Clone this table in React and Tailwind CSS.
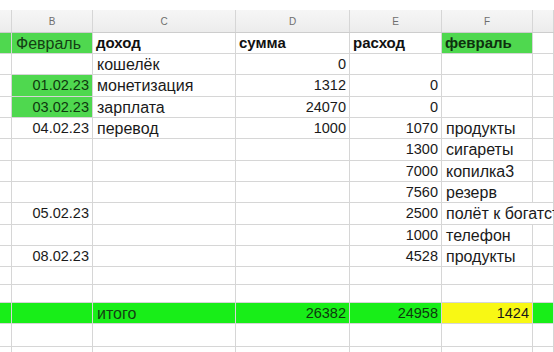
import React from 'react';

const widths = ['w-[12px]', 'w-[81px]', 'w-[143px]', 'w-[114px]', 'w-[92px]', 'w-[91px]', 'flex-1'];
const letters = ['', 'B', 'C', 'D', 'E', 'F', ''];

const GREEN = 'bg-[#4fd84f]';
const BRIGHT = 'bg-[#18ee18]';
const YELLOW = 'bg-[#f8f814]';

// each cell: [text, kind, bg]
// kind: 't' left text, 'b' bold left, 'n' right number, 'g' right green text number
const rows = [
  { h: 'h-[21px]', cells: [['', 't', GREEN], ['Февраль', 'tg', GREEN], ['доход', 'b'], ['сумма', 'b'], ['расход', 'b'], ['февраль', 'bg', GREEN], ['', 't']] },
  { h: 'h-[21px]', cells: [[''], [''], ['кошелёк', 't'], ['0', 'n'], [''], [''], ['']] },
  { h: 'h-[22px]', cells: [[''], ['01.02.23', 'g', GREEN], ['монетизация', 't'], ['1312', 'n'], ['0', 'n'], [''], ['']] },
  { h: 'h-[21px]', cells: [[''], ['03.02.23', 'g', GREEN], ['зарплата', 't'], ['24070', 'n'], ['0', 'n'], [''], ['']] },
  { h: 'h-[21px]', cells: [[''], ['04.02.23', 'n'], ['перевод', 't'], ['1000', 'n'], ['1070', 'n'], ['продукты', 't'], ['']] },
  { h: 'h-[22px]', cells: [[''], [''], [''], [''], ['1300', 'n'], ['сигареты', 't'], ['']] },
  { h: 'h-[21px]', cells: [[''], [''], [''], [''], ['7000', 'n'], ['копилка3', 't'], ['']] },
  { h: 'h-[21px]', cells: [[''], [''], [''], [''], ['7560', 'n'], ['резерв', 't'], ['']] },
  { h: 'h-[22px]', overflow: true, cells: [[''], ['05.02.23', 'n'], [''], [''], ['2500', 'n'], ['полёт к богатству', 't'], ['']] },
  { h: 'h-[21px]', cells: [[''], [''], [''], [''], ['1000', 'n'], ['телефон', 't'], ['']] },
  { h: 'h-[21px]', cells: [[''], ['08.02.23', 'n'], [''], [''], ['4528', 'n'], ['продукты', 't'], ['']] },
  { h: 'h-[18px]', cells: [[''], [''], [''], [''], [''], [''], ['']] },
  { h: 'h-[18px]', cells: [[''], [''], [''], [''], [''], [''], ['']] },
  { h: 'h-[21px]', cells: [['', 't', BRIGHT], ['', 't', BRIGHT], ['итого', 'tg', BRIGHT], ['26382', 'g', BRIGHT], ['24958', 'g', BRIGHT], ['1424', 'n', YELLOW], ['', 't', BRIGHT]] },
  { h: 'h-[23px]', cells: [[''], [''], [''], [''], [''], [''], ['']] },
  { h: 'h-[21px]', cells: [[''], [''], [''], [''], [''], [''], ['']] },
];

const kindClass = {
  t: 'justify-start pl-[4px] text-[16px] text-[#1a1a1a]',
  tg: 'justify-start pl-[4px] text-[16px] text-[#143f14]',
  b: 'justify-start pl-[3px] text-[15px] font-bold text-[#111]',
  bg: 'justify-start pl-[3px] text-[15px] font-bold text-[#0e300e]',
  n: 'justify-end pr-[3px] text-[14.5px] text-[#1a1a1a]',
  g: 'justify-end pr-[3px] text-[14.5px] text-[#0e380e]',
};

const Cell = ({ w, text, kind = 't', bg, noRight, overflow }) => (
  <div
    className={`${w} shrink-0 h-full flex items-center pt-[1px] whitespace-nowrap border-b border-[#d6d6d6] ${
      noRight ? '' : 'border-r'
    } ${bg || ''} ${kindClass[kind]} ${overflow ? 'overflow-visible relative z-10' : 'overflow-hidden'}`}
  >
    {text}
  </div>
);

export default function App() {
  return (
    <div
      className="w-[554px] h-[352px] overflow-hidden bg-white"
      style={{ fontFamily: '"Liberation Sans", Arial, sans-serif' }}
    >
      <div className="h-[10px] bg-white" />
      {/* column letters */}
      <div className="flex h-[23px] bg-gradient-to-b from-[#f6f6f6] to-[#ececec] border-b border-[#cdcdcd]">
        {letters.map((l, i) => (
          <div
            key={i}
            className={`${widths[i]} shrink-0 flex items-center justify-center border-r border-[#d6d6d6] text-[10px] text-[#6e6e6e]`}
          >
            {l}
          </div>
        ))}
      </div>
      {rows.map((r, ri) => (
        <div key={ri} className={`flex ${r.h}`}>
          {r.cells.map((c, ci) => (
            <Cell
              key={ci}
              w={widths[ci]}
              text={c[0]}
              kind={c[1] || 't'}
              bg={c[2]}
              noRight={r.overflow && ci === 5}
              overflow={r.overflow && ci === 5}
            />
          ))}
        </div>
      ))}
    </div>
  );
}
